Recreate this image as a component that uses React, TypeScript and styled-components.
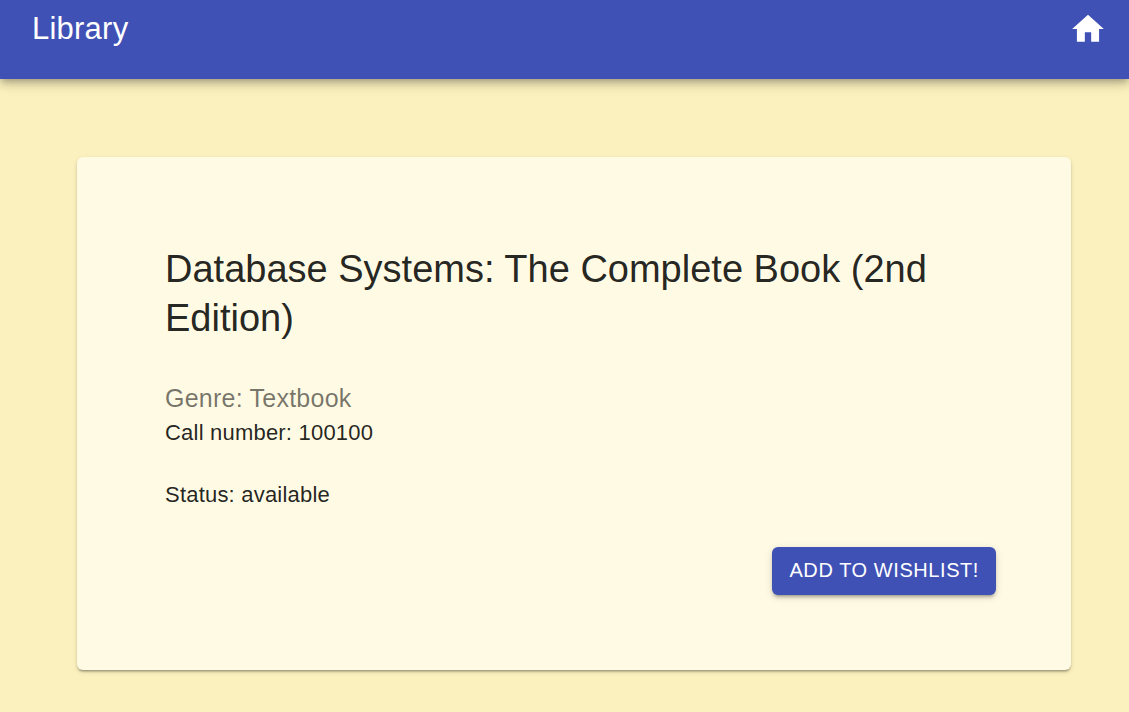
import React from "react";
import styled, { createGlobalStyle } from "styled-components";

const GlobalStyle = createGlobalStyle`
  * { box-sizing: border-box; }
  body {
    margin: 0;
    background: #fbf1be;
    color: rgba(0, 0, 0, 0.87);
    font-family: "Liberation Sans", Arial, sans-serif;
  }
`;

const AppBar = styled.header`
  display: flex;
  justify-content: space-between;
  align-items: flex-start;
  padding: 10px 22px 31px 32px;
  background: #3f51b5;
  color: #fff;
  box-shadow: 0 3px 6px -2px rgba(0, 0, 0, 0.2), 0 6px 8px 0 rgba(0, 0, 0, 0.14),
    0 2px 16px 0 rgba(0, 0, 0, 0.12);
`;

const Brand = styled.h1`
  margin: 0;
  font-size: 31px;
  line-height: 38px;
  font-weight: 500;
  letter-spacing: 0.0075em;
`;

const HomeLink = styled.a`
  display: flex;
  color: inherit;
`;

const HomeIcon = styled.svg`
  width: 38px;
  height: 38px;
  fill: currentColor;
`;

const Card = styled.main`
  margin: 78px 58px 42px 77px;
  padding: 75px;
  background: #fffae3;
  border-radius: 6px;
  box-shadow: 0 3px 2px -2px rgba(0, 0, 0, 0.2), 0 2px 2px 0 rgba(0, 0, 0, 0.14),
    0 2px 5px 0 rgba(0, 0, 0, 0.12);
`;

const CardContent = styled.section`
  padding: 13px;
`;

const Title = styled.h2`
  margin: 0 0 38px;
  font-size: 38px;
  line-height: 49px;
  font-weight: 400;
`;

const Genre = styled.p`
  margin: 0;
  padding-bottom: 2px;
  font-size: 25px;
  line-height: 34px;
  letter-spacing: 0.00938em;
  color: rgba(0, 0, 0, 0.54);
`;

const Detail = styled.p`
  margin: 0 0 31px;
  font-size: 22px;
  line-height: 31px;
  letter-spacing: 0.00938em;

  &:last-child {
    margin-bottom: 0;
  }
`;

const CardActions = styled.div`
  display: flex;
  justify-content: flex-end;
  padding-top: 24px;
`;

const Button = styled.button`
  height: 48px;
  padding: 0 17px 2px;
  border: 0;
  border-radius: 6px;
  background: #3f51b5;
  color: #fff;
  font-family: inherit;
  font-size: 20px;
  line-height: 36px;
  font-weight: 500;
  letter-spacing: 0.02857em;
  text-transform: uppercase;
  cursor: pointer;
  box-shadow: 0 4px 2px -3px rgba(0, 0, 0, 0.2), 0 3px 3px 0 rgba(0, 0, 0, 0.14),
    0 2px 8px 0 rgba(0, 0, 0, 0.12);
`;

export default function App() {
  return (
    <>
      <GlobalStyle />
      <AppBar>
        <Brand>Library</Brand>
        <HomeLink href="#" aria-label="Home">
          <HomeIcon viewBox="0 0 24 24" aria-hidden="true">
            <path d="M10 20v-6h4v6h5v-8h3L12 3 2 12h3v8z" />
          </HomeIcon>
        </HomeLink>
      </AppBar>
      <Card>
        <CardContent>
          <Title>Database Systems: The Complete Book (2nd Edition)</Title>
          <Genre>Genre: Textbook</Genre>
          <Detail>Call number: 100100</Detail>
          <Detail>Status: available</Detail>
        </CardContent>
        <CardActions>
          <Button type="button">Add to wishlist!</Button>
        </CardActions>
      </Card>
    </>
  );
}
